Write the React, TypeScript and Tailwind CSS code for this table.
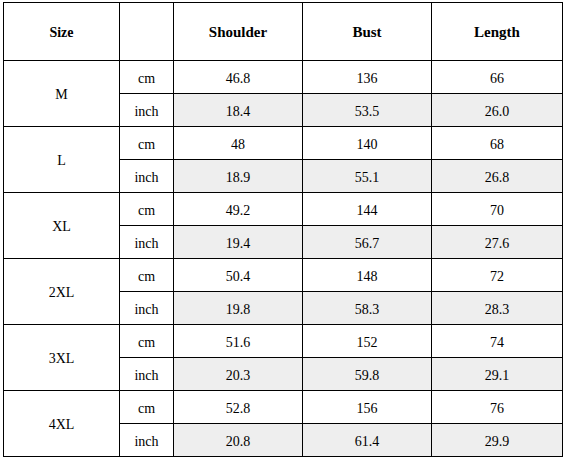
const rows = [
  { size: "M", cm: ["46.8", "136", "66"], inch: ["18.4", "53.5", "26.0"] },
  { size: "L", cm: ["48", "140", "68"], inch: ["18.9", "55.1", "26.8"] },
  { size: "XL", cm: ["49.2", "144", "70"], inch: ["19.4", "56.7", "27.6"] },
  { size: "2XL", cm: ["50.4", "148", "72"], inch: ["19.8", "58.3", "28.3"] },
  { size: "3XL", cm: ["51.6", "152", "74"], inch: ["20.3", "59.8", "29.1"] },
  { size: "4XL", cm: ["52.8", "156", "76"], inch: ["20.8", "61.4", "29.9"] },
];

const cell = "flex items-center justify-center pt-[2px] border-r border-b border-black";

export default function App() {
  return (
    <div className="w-[564px] h-[460px] bg-white pl-[3px] pt-[2px] text-black font-['Liberation_Serif','Times_New_Roman',serif]">
      <div className="grid w-[560px] grid-cols-[116px_54px_129px_129px_131px] grid-rows-[58px_repeat(12,33px)] border-l border-t border-black text-[14px]">
        {/* Header */}
        <div className={`${cell} font-bold text-[14px]`}>Size</div>
        <div className={cell}></div>
        <div className={`${cell} font-bold text-[15px]`}>Shoulder</div>
        <div className={`${cell} font-bold text-[15px]`}>Bust</div>
        <div className={`${cell} font-bold text-[15px]`}>Length</div>

        {rows.map((r) => (
          <div key={r.size} className="contents">
            <div className={`${cell} row-span-2`}>{r.size}</div>
            <div className={cell}>cm</div>
            {r.cm.map((v, i) => (
              <div key={"c" + i} className={cell}>
                {v}
              </div>
            ))}
            <div className={cell}>inch</div>
            {r.inch.map((v, i) => (
              <div key={"i" + i} className={`${cell} bg-[#eeeeee]`}>
                {v}
              </div>
            ))}
          </div>
        ))}
      </div>
    </div>
  );
}
